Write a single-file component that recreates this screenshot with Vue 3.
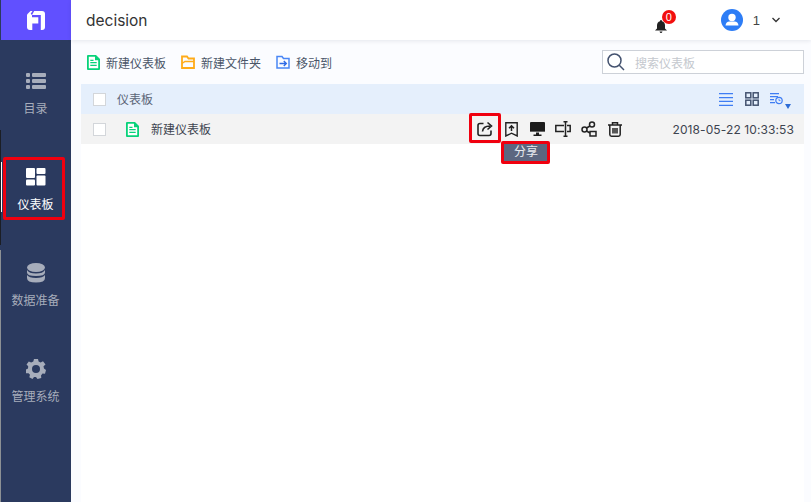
<script setup>
const navItems = [
  { key: 'list', label: '目录' },
  { key: 'dash', label: '仪表板', active: true },
  { key: 'db', label: '数据准备' },
  { key: 'gear', label: '管理系统' },
]
</script>

<template>
  <div class="app">
    <aside class="side">
      <div class="logo">
        <svg width="18" height="19" viewBox="0 0 18 19"><path fill="#fff" d="M3.500 0H15Q18 0 18 3V16Q18 19 15 19H3Q0 19 0 16V3.500Z"/><path fill="#6150ff" d="M5 4H13.800V19H11.300V6.300H5ZM5.300 12.500H11.300V19H5.300ZM3.700 2.800L5.500 0H7.200L5 4Z"/></svg>
      </div>
      <nav class="nav">
        <div v-for="n in navItems" :key="n.key" class="nav-item" :class="{ active: n.active }">
          <svg v-if="n.key === 'list'" class="nav-ico" width="22" height="18" viewBox="0 0 22 18"><g fill="currentColor"><rect x="1" y="1" width="4" height="4" rx="1"/><rect x="7" y="1" width="14" height="4" rx="1"/><rect x="1" y="7" width="4" height="4" rx="1"/><rect x="7" y="7" width="14" height="4" rx="1"/><rect x="1" y="13" width="4" height="4" rx="1"/><rect x="7" y="13" width="14" height="4" rx="1"/></g></svg>
          <svg v-else-if="n.key === 'dash'" class="nav-ico" width="20" height="18" viewBox="0 0 20 18"><g fill="currentColor"><rect x="0" y="0" width="9" height="10" rx="1"/><rect x="10.500" y="0" width="9" height="6" rx="1"/><rect x="0" y="11.500" width="9" height="6" rx="1"/><rect x="10.500" y="7.500" width="9" height="10" rx="1"/></g></svg>
          <svg v-else-if="n.key === 'db'" class="nav-ico" width="20" height="20" viewBox="0 0 20 20"><g fill="currentColor"><ellipse cx="10" cy="4.500" rx="9" ry="4.500"/><path d="M1 7Q3 10.500 10 10.500T19 7V9.500Q19 13 10 13T1 9.500Z"/><path d="M1 12Q3 15 10 15T19 12V15Q19 19.500 10 19.500T1 15Z"/></g></svg>
          <svg v-else class="nav-ico" width="20" height="20" viewBox="0 0 20 20"><path fill="currentColor" fill-rule="evenodd" d="M8 0H12L12.600 2.600L14.600 3.500L17 2.200L19.500 5.500L17.500 7.300L18 9.500L20 11L19 14.800L16.500 14.600L15 16.400L15.300 19L11.500 20L10 18L8 18L6.500 20L3.300 18.300L4 15.800L2.500 14.200L0 14.300L0 10.500L2 9.500L2.200 7.300L0.500 5.500L2.800 2.500L5.200 3.600L7.300 2.600ZM10 6A4 4 0 1 0 10 14A4 4 0 1 0 10 6Z"/></svg>
          <span class="nav-label">{{ n.label }}</span>
        </div>
      </nav>
    </aside>
    <div class="main">
      <header class="top">
        <span class="title">decision</span>
        <div class="bell">
          <svg width="12" height="13" viewBox="0 0 12 13"><path fill="#222" d="M6 0Q7 0 7 1.200Q10 2 10 5.500V8.500L12 10.500H0L2 8.500V5.500Q2 2 5 1.200Q5 0 6 0ZM4.500 11.500H7.500Q7 13 6 13T4.500 11.500Z"/></svg>
          <span class="badge">0</span>
        </div>
        <div class="user">
          <svg width="22" height="22" viewBox="0 0 22 22"><circle cx="11" cy="11" r="11" fill="#2d7df6"/><circle cx="11" cy="8.500" r="3.700" fill="#fff"/><path d="M4.500 16.500Q5 12.500 8.500 12.500H13.500Q17 12.500 17.500 16.500Z" fill="#fff"/></svg>
          <span class="uname">1</span>
          <svg width="10" height="6" viewBox="0 0 10 6"><path d="M1.500 1L5 4.500L8.500 1" fill="none" stroke="#333" stroke-width="1.300"/></svg>
        </div>
      </header>
      <div class="body">
        <div class="toolbar">
          <div class="tool">
            <svg width="13" height="15" viewBox="0 0 13 15"><path fill="#07d27a" d="M1 0H9L13 4V14Q13 15 12 15H1Q0 15 0 14V1Q0 0 1 0Z"/><path fill="#fff" d="M1.800 1.800H8V5.200H11.200V13.200H1.800Z"/><path fill="#07d27a" d="M3.300 4.800H6.500V6H3.300ZM3.300 7H9.700V8.300H3.300ZM3.300 9.700H9.700V11H3.300Z"/></svg>
            <span>新建仪表板</span>
          </div>
          <div class="tool">
            <svg width="14" height="14" viewBox="0 0 14 14"><path fill="none" stroke="#ffab19" stroke-width="1.800" d="M1 13V1.500H6L7.500 3.500H13V13Z"/><path fill="none" stroke="#ffab19" stroke-width="1.500" d="M1 8.500L4 6.500H13"/></svg>
            <span>新建文件夹</span>
          </div>
          <div class="tool">
            <svg width="14" height="14" viewBox="0 0 14 14"><path fill="none" stroke="#4a86f5" stroke-width="1.500" d="M1 13V1.500H6L7.500 3.500H13V13Z"/><path fill="none" stroke="#2e6be6" stroke-width="1.400" d="M3.500 8.500H10M7.800 6L10.300 8.500L7.800 11"/></svg>
            <span>移动到</span>
          </div>
          <label class="search">
            <svg width="18" height="18" viewBox="0 0 18 18"><circle cx="7.500" cy="7.500" r="6.500" fill="none" stroke="#44526f" stroke-width="1.500"/><path d="M12.300 12.300L17 17" stroke="#44526f" stroke-width="1.500"/></svg>
            <span>搜索仪表板</span>
          </label>
        </div>
        <div class="table">
          <div class="thead">
            <span class="check"></span>
            <span class="th-name">仪表板</span>
            <div class="views">
              <svg width="14" height="13" viewBox="0 0 14 13"><path stroke="#3f7df3" stroke-width="1.300" d="M0 .7H14M0 4.700H14M0 8.300H14M0 12.300H14"/></svg>
              <svg width="14" height="14" viewBox="0 0 14 14"><g fill="none" stroke="#44526f" stroke-width="1.500"><rect x=".8" y=".8" width="5" height="5"/><rect x="8.200" y=".8" width="5" height="5"/><rect x=".8" y="8.200" width="5" height="5"/><rect x="8.200" y="8.200" width="5" height="5"/></g></svg>
              <svg class="sort" width="21" height="17" viewBox="0 0 21 17"><g fill="none" stroke="#3f7df3" stroke-width="1.200"><path d="M0 .6H9M0 3.600H8M0 6.600H4M0 9.600H5"/><circle cx="9" cy="7.500" r="3.200"/><path d="M9 5.800V7.600H10.500" stroke-width=".8"/></g><path d="M15 11H21L18 16Z" fill="#2d6cd6"/></svg>
            </div>
          </div>
          <div class="row">
            <span class="check"></span>
            <svg class="row-file" width="13" height="15" viewBox="0 0 13 15"><path fill="#07d27a" d="M1 0H9L13 4V14Q13 15 12 15H1Q0 15 0 14V1Q0 0 1 0Z"/><path fill="#fff" d="M1.800 1.800H8V5.200H11.200V13.200H1.800Z"/><path fill="#07d27a" d="M3.300 4.800H6.500V6H3.300ZM3.300 7H9.700V8.300H3.300ZM3.300 9.700H9.700V11H3.300Z"/></svg>
            <span class="row-name">新建仪表板</span>
            <div class="actions">
              <div class="act act-share">
                <svg width="16" height="16" viewBox="0 0 16 16"><path fill="none" stroke="#222" stroke-width="1.600" d="M6.500 2.500H3Q1 2.500 1 4.500V12.500Q1 14.500 3 14.500H12Q14 14.500 14 12.500V9.500"/><path fill="none" stroke="#222" stroke-width="1.600" d="M5.500 10.500Q6 5 13 5M10.500 1.500L14.500 5L10.500 8.500"/></svg>
                <div class="tip">分享</div>
              </div>
              <div class="act">
                <svg width="13" height="15" viewBox="0 0 13 15"><path fill="none" stroke="#222" stroke-width="1.400" d="M.8 .8H12.200V14L6.500 11.200L.8 14Z"/><path fill="none" stroke="#222" stroke-width="1.500" d="M6.500 9V4M4 6.200L6.500 3.700L9 6.200"/></svg>
              </div>
              <div class="act">
                <svg width="15" height="14" viewBox="0 0 15 14"><path fill="#1c1c1c" d="M1 0H14Q15 0 15 1V9H0V1Q0 0 1 0Z"/><path fill="#666" d="M0 9H15V10H0Z"/><path fill="#1c1c1c" d="M6 10.500H9V12.500H11.500V14H3.500V12.500H6Z"/></svg>
              </div>
              <div class="act">
                <svg width="16" height="16" viewBox="0 0 16 16"><g fill="none" stroke="#222" stroke-width="1.500"><path d="M9 4.500H.8V10.500H9M12 4.500H15.200V10.500H12M8.500 .8H12.500M8.500 15.200H12.500M10.500 .8V15.200"/></g></svg>
              </div>
              <div class="act">
                <svg width="16" height="16" viewBox="0 0 16 16"><g fill="none" stroke="#222" stroke-width="1.500"><circle cx="3.500" cy="8.500" r="2.500"/><circle cx="11" cy="3.500" r="2.500"/><rect x="9" y="10.500" width="6" height="4.500"/><path d="M5.500 7L9 5M5.500 10L9 12"/></g></svg>
              </div>
              <div class="act">
                <svg width="14" height="15" viewBox="0 0 14 15"><g fill="none" stroke="#222" stroke-width="1.500"><path d="M0 3H14M4.500 2.800V.8H9.500V2.800M1.800 3.500V12.500Q1.800 14.200 3.500 14.200H10.500Q12.200 14.200 12.200 12.500V3.500M5 6V11.500M7 6V11.500M9 6V11.500"/></g></svg>
              </div>
            </div>
            <span class="row-time">2018-05-22 10:33:53</span>
          </div>
        </div>
      </div>
    </div>
  </div>
</template>

<style scoped>
.app {
  display: flex;
  width: 811px;
  height: 502px;
  overflow: hidden;
  background: #fff;
  font-family: "Liberation Sans", "Noto Sans CJK SC", sans-serif;
  color: #4a5568;
}
.side { position: relative; width: 71px; flex: none; background: #2b3a5f; display: flex; flex-direction: column; }
.side::before {
  content: "";
  position: absolute;
  left: 0;
  top: 0;
  width: 1px;
  height: 502px;
  background: linear-gradient(to bottom, #2b3a5f 0 130px, #1b1e25 130px 245px, #2b3a5f 245px 250px, #8d9195 250px 502px);
}
.side::after {
  content: "";
  position: absolute;
  left: 1px;
  top: 162px;
  width: 1px;
  height: 50px;
  background: #fff;
}
.logo { height: 40px; background: #6150ff; display: flex; align-items: center; justify-content: center; }
.nav { display: flex; flex-direction: column; padding-top: 9px; }
.nav-item {
  position: relative;
  height: 96px;
  display: flex;
  flex-direction: column;
  align-items: center;
  color: #a7adbb;
  font-size: 12px;
}
.nav-ico { position: absolute; top: 32px; left: 50%; transform: translate(-50%, -50%); }
.nav-label { position: absolute; top: 52px; line-height: 17px; white-space: nowrap; }
.nav-item.active { color: #fff; }
.nav-item.active::after {
  content: "";
  position: absolute;
  left: 3px;
  top: 12px;
  width: 62px;
  height: 63px;
  box-sizing: border-box;
  border: 3px solid #f0000f;
  border-radius: 2px;
}
.main { flex: 1; min-width: 0; display: flex; flex-direction: column; }
.top {
  height: 40px;
  flex: none;
  display: flex;
  align-items: center;
  padding-left: 15px;
  background: #fff;
  box-shadow: 0 1px 4px rgba(30, 40, 70, 0.1);
  position: relative;
}
.title { font-size: 15.5px; color: #333; font-family: Inter, "Liberation Sans", sans-serif; flex: 1; }
.bell { position: relative; width: 12px; height: 13px; margin-right: 54px; margin-top: 13px; display: flex; }
.badge {
  position: absolute;
  left: 7px;
  top: -10px;
  width: 14px;
  height: 14px;
  border-radius: 50%;
  background: #f20f0f;
  color: #fff;
  font-size: 11px;
  line-height: 14px;
  text-align: center;
}
.user { display: flex; align-items: center; margin-right: 30px; }
.uname { font-size: 13px; color: #444; margin: 0 11px 0 10px; }
.body { flex: 1; min-height: 0; background: #fbfcff; padding: 0 7px 0 10px; display: flex; flex-direction: column; }
.toolbar { height: 44px; flex: none; display: flex; align-items: center; padding-left: 6px; }
.tool { display: flex; align-items: center; gap: 6px; font-size: 12px; margin-right: 15px; color: #4a5568; }
.search {
  margin-left: auto;
  width: 202px;
  height: 24px;
  box-sizing: border-box;
  border: 1px solid #cdd1d8;
  background: #fff;
  display: flex;
  align-items: center;
  gap: 10px;
  padding-left: 4px;
  font-size: 12px;
  color: #c4c8ce;
}
.table { flex: 1; background: #fff; }
.thead, .row { height: 30px; display: flex; align-items: center; padding-left: 12px; font-size: 12px; }
.thead { background: #e5effc; }
.row { background: #f3f3f3; color: #3d4450; }
.check { width: 11px; height: 11px; border: 1px solid #d3d6da; background: #fff; flex: none; }
.th-name { margin-left: 11px; padding-bottom: 2px; flex: 1; color: #5b6577; }
.views { display: flex; align-items: center; gap: 12px; padding-right: 13px; }
.sort { margin-left: -1px; margin-top: 4px; }
.row-file { margin-left: 20px; }
.row-name { margin-left: 12px; padding-bottom: 2px; flex: 1; }
.actions { display: flex; gap: 10px; margin-right: 49px; align-items: center; }
.act { position: relative; width: 16px; height: 16px; display: flex; align-items: center; justify-content: center; }
.act-share::before {
  content: "";
  position: absolute;
  left: -8px;
  top: -8px;
  width: 32px;
  height: 30px;
  box-sizing: border-box;
  border: 3px solid #f0000f;
  border-radius: 2px;
}
.tip {
  position: absolute;
  left: 24px;
  top: 20px;
  width: 49px;
  height: 23px;
  box-sizing: border-box;
  border: 3px solid #f0000f;
  border-radius: 2px;
  background: #5c6780;
  color: #e9ebef;
  font-size: 12px;
  line-height: 17px;
  text-align: center;
}
.row-time { font-size: 12px; letter-spacing: 0.1px; padding-right: 10px; color: #3d4450; font-family: Inter, "Liberation Sans", sans-serif; }
</style>
